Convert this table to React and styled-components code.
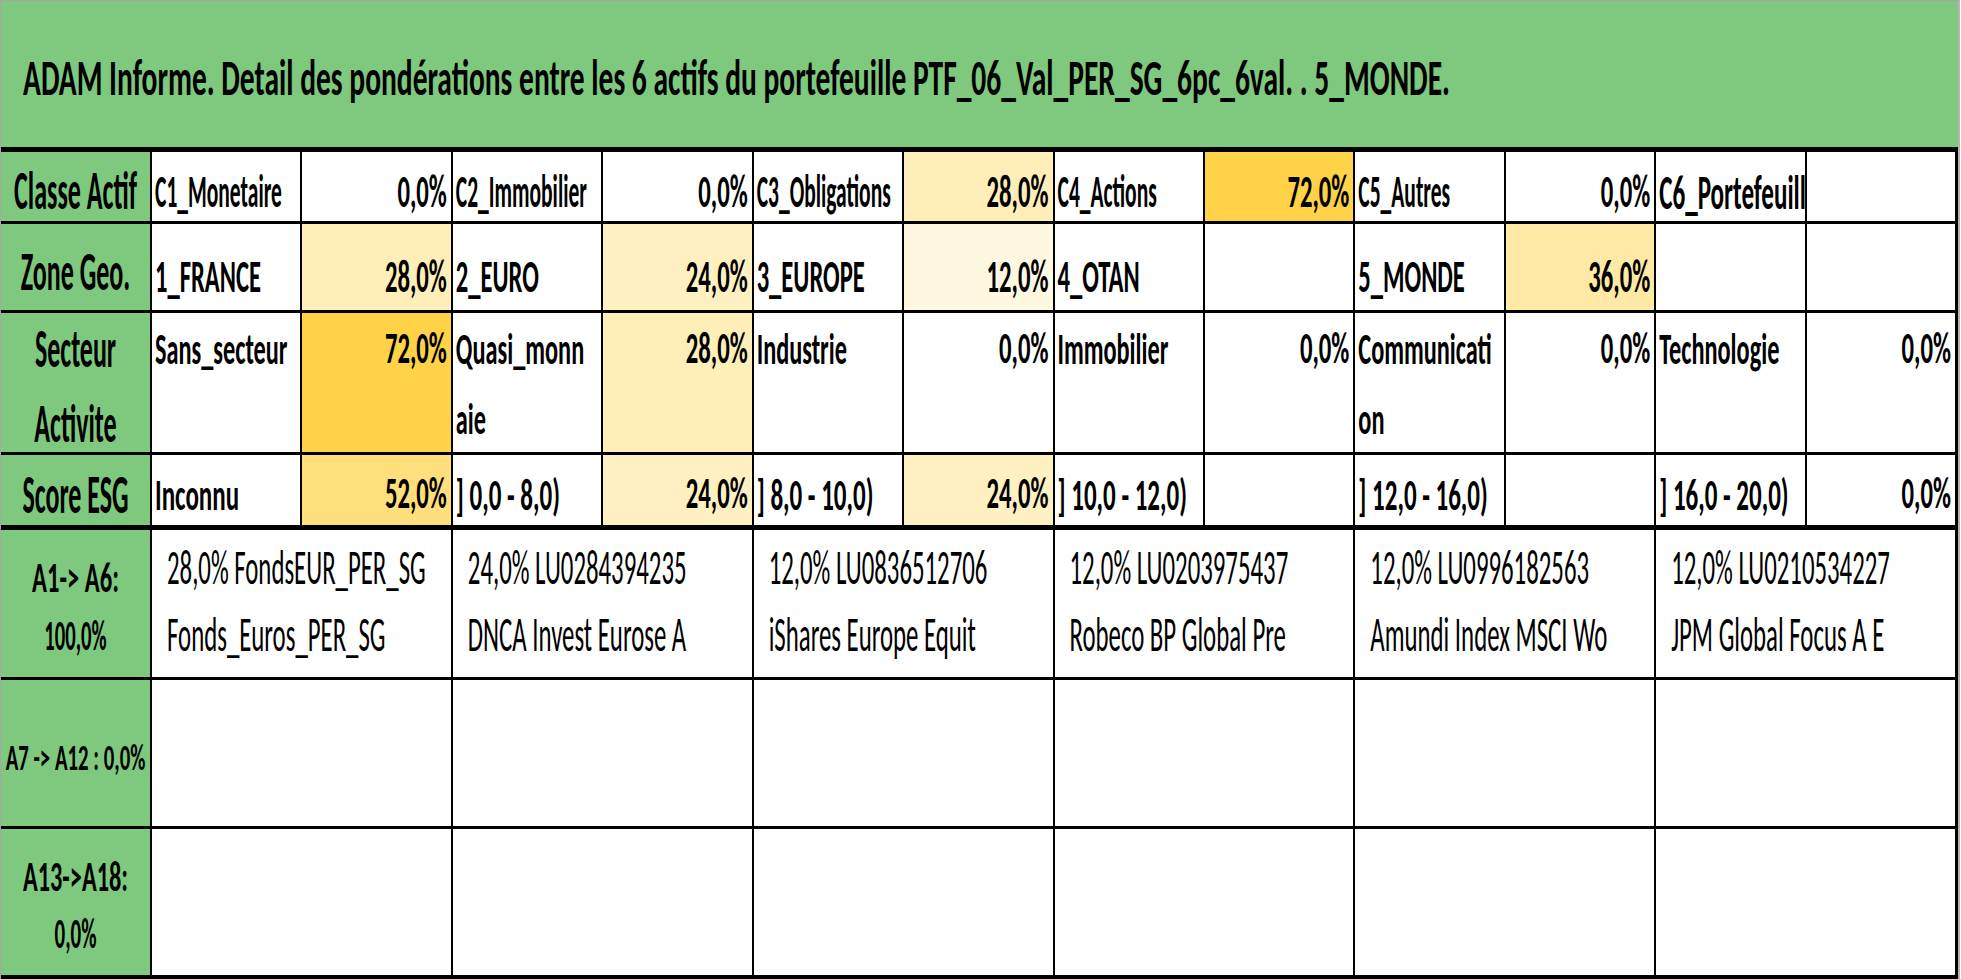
import React from "react";
import styled, { createGlobalStyle } from "styled-components";

const GREEN = "#7fc97e";
const FONT = "Carlito, Calibri, Lato, sans-serif";
// baseline sits at 0.8em inside a line-height:1 box for this font
const ASC = 0.8;

// Excel-like colour scale: white at 0 %, gold at the max (72 %)
function heat(value) {
  if (!value) return "#ffffff";
  const t = Math.min(1, parseFloat(value.replace(",", ".")) / 72);
  const g = Math.round(255 - (255 - 210) * t);
  const b = Math.round(255 - (255 - 72) * t);
  return `rgb(255, ${g}, ${b})`;
}

const topRows = [
  {
    h: 69, bb: 3, valign: "bottom", base: 14, step: 0,
    name: { fs: 21.5, sy: 2.13 }, value: { fs: 24.7, sy: 1.86 },
    label: { lines: ["Classe Actif"], valign: "bottom", base: 14, step: 0 },
    cells: [
      [["C1_Monetaire"], "0,0%"],
      [["C2_Immobilier"], "0,0%"],
      [["C3_Obligations"], "28,0%"],
      [["C4_Actions"], "72,0%"],
      [["C5_Autres"], "0,0%"],
      [["C6_Portefeuill"], "", { fs: 25.1, sy: 1.92 }],
    ],
  },
  {
    h: 86, bb: 3, valign: "bottom", base: 18, step: 0,
    name: { fs: 24.6, sy: 1.87 }, value: { fs: 24.7, sy: 1.86 },
    label: { lines: ["Zone Geo."], valign: "bottom", base: 22, step: 0 },
    cells: [
      [["1_FRANCE"], "28,0%"],
      [["2_EURO"], "24,0%"],
      [["3_EUROPE"], "12,0%"],
      [["4_OTAN"], ""],
      [["5_MONDE"], "36,0%"],
      [[""], ""],
    ],
  },
  {
    h: 139, bb: 3, valign: "top", base: 50, step: 70,
    name: { fs: 24.3, sy: 1.82 }, value: { fs: 24.7, sy: 1.8 },
    label: { lines: ["Secteur", "Activite"], valign: "top", base: 52, step: 75 },
    cells: [
      [["Sans_secteur"], "72,0%"],
      [["Quasi_monn", "aie"], "28,0%"],
      [["Industrie"], "0,0%"],
      [["Immobilier"], "0,0%"],
      [["Communicati", "on"], "0,0%"],
      [["Technologie"], "0,0%"],
    ],
  },
  {
    h: 70, bb: 5, valign: "bottom", base: 17, step: 0,
    name: { fs: 25, sy: 1.77 }, value: { fs: 24.7, sy: 1.83 },
    label: { lines: ["Score ESG"], valign: "bottom", base: 14, step: 0 },
    cells: [
      [["Inconnu"], "52,0%"],
      [["] 0,0 - 8,0)"], "24,0%"],
      [["] 8,0 - 10,0)"], "24,0%"],
      [["] 10,0 - 12,0)"], ""],
      [["] 12,0 - 16,0)"], ""],
      [["] 16,0 - 20,0)"], "0,0%"],
    ],
  },
];

const LABEL = { fs: 26, sy: 2.08 };
const ASSET = { fs: 24.8, sy: 2.0, base: 54, step: 67 };

const assetRows = [
  {
    h: 147, bb: 3,
    label: {
      pt: 42.3, gap: 36.5,
      lines: [
        { text: "A1-> A6:", fs: 24.6, sy: 1.74 },
        { text: "100,0%", fs: 20.7, sy: 2.0 },
      ],
    },
    assets: [
      ["28,0% FondsEUR_PER_SG", "Fonds_Euros_PER_SG"],
      ["24,0% LU0284394235", "DNCA Invest Eurose A"],
      ["12,0% LU0836512706", "iShares Europe Equit"],
      ["12,0% LU0203975437", "Robeco BP Global Pre"],
      ["12,0% LU0996182563", "Amundi Index MSCI Wo"],
      ["12,0% LU0210534227", "JPM Global Focus A E"],
    ],
  },
  {
    h: 146, bb: 3,
    label: {
      pt: 73.4, gap: 0,
      lines: [{ text: "A7 -> A12 : 0,0%", fs: 20.8, sy: 1.75 }],
    },
    assets: [[], [], [], [], [], []],
  },
  {
    h: 146, bb: 0,
    label: {
      pt: 41.6, gap: 36.3,
      lines: [
        { text: "A13->A18:", fs: 24.3, sy: 1.74 },
        { text: "0,0%", fs: 21, sy: 2.0 },
      ],
    },
    assets: [[], [], [], [], [], []],
  },
];

export default function App() {
  return (
    <>
      <GlobalStyle />
      <Frame>
        <Header>
          <Txt $fs={29.5} $sy={1.72} $bold>
            ADAM Informe. Detail des pondérations entre les 6 actifs du portefeuille
            PTF_06_Val_PER_SG_6pc_6val. . 5_MONDE.
          </Txt>
        </Header>
        <Table>
          {topRows.map((row, i) => (
            <TopRow key={i} $h={row.h} $bb={row.bb}>
              <LabelCell
                $valign={row.label.valign}
                $base={row.label.base}
                $step={row.label.step}
                $fs={LABEL.fs}
              >
                {row.label.lines.map((l) => (
                  <Txt key={l} $fs={LABEL.fs} $sy={LABEL.sy} $bold $origin="50%">
                    {l}
                  </Txt>
                ))}
              </LabelCell>
              {row.cells.map(([name, value, own], j) => {
                const ns = own || row.name;
                return (
                  <React.Fragment key={j}>
                    <DataCell
                      $valign={row.valign}
                      $base={row.base}
                      $step={row.step}
                      $fs={ns.fs}
                    >
                      {name.map((l, k) => (
                        <Txt key={k} $fs={ns.fs} $sy={ns.sy} $bold>
                          {l}
                        </Txt>
                      ))}
                    </DataCell>
                    <DataCell
                      $valign={row.valign}
                      $base={row.base}
                      $fs={row.value.fs}
                      $right
                      $bg={heat(value)}
                    >
                      <Txt $fs={row.value.fs} $sy={row.value.sy} $bold $origin="100%">
                        {value}
                      </Txt>
                    </DataCell>
                  </React.Fragment>
                );
              })}
            </TopRow>
          ))}
          {assetRows.map((row, i) => (
            <AssetRow key={i} $h={row.h} $bb={row.bb}>
              <AssetLabel $pt={row.label.pt} $gap={row.label.gap}>
                {row.label.lines.map((l) => (
                  <Txt key={l.text} $fs={l.fs} $sy={l.sy} $bold $origin="50%">
                    {l.text}
                  </Txt>
                ))}
              </AssetLabel>
              {row.assets.map((lines, j) => (
                <AssetCell key={j}>
                  {lines.map((l) => (
                    <Txt key={l} $fs={ASSET.fs} $sy={ASSET.sy}>
                      {l}
                    </Txt>
                  ))}
                </AssetCell>
              ))}
            </AssetRow>
          ))}
        </Table>
      </Frame>
    </>
  );
}

const GlobalStyle = createGlobalStyle`
  html, body {
    margin: 0;
    padding: 0;
    background: #ffffff;
  }
  body {
    font-family: ${FONT};
    color: #000;
    overflow: hidden;
  }
  * {
    box-sizing: border-box;
  }
`;

const Frame = styled.div`
  width: 1960px;
  border-top: 1px solid #a6a6a6;
  border-left: 1px solid #a6a6a6;
  border-right: 2px solid #b4b4b4;
`;

const Header = styled.div`
  height: 146px;
  background: ${GREEN};
  padding: ${94 - ASC * 29.5}px 0 0 22px;
`;

const Table = styled.div`
  border-top: 5px solid #000;
  border-right: 3px solid #000;
  border-bottom: 4px solid #000;
`;

const TopRow = styled.div`
  display: grid;
  grid-template-columns: 149px repeat(12, 1fr);
  height: ${(p) => p.$h + p.$bb}px;
  border-bottom: ${(p) => p.$bb}px solid #000;
`;

const AssetRow = styled.div`
  display: grid;
  grid-template-columns: 149px repeat(6, 1fr);
  height: ${(p) => p.$h + p.$bb}px;
  border-bottom: ${(p) => p.$bb}px solid #000;
`;

// shared vertical placement: put the first baseline $base px from the top
// (top aligned) or the last baseline $base px above the bottom
const Cell = styled.div`
  display: flex;
  flex-direction: column;
  justify-content: ${(p) => (p.$valign === "top" ? "flex-start" : "flex-end")};
  gap: ${(p) => (p.$step ? p.$step - p.$fs : 0)}px;
  padding-top: ${(p) => (p.$valign === "top" ? p.$base - ASC * p.$fs : 0)}px;
  padding-bottom: ${(p) => (p.$valign === "top" ? 0 : p.$base - (1 - ASC) * p.$fs)}px;
  min-width: 0;
`;

const LabelCell = styled(Cell)`
  background: ${GREEN};
  align-items: center;
`;

const DataCell = styled(Cell)`
  background: ${(p) => p.$bg || "#ffffff"};
  border-left: 2px solid #000;
  align-items: ${(p) => (p.$right ? "flex-end" : "flex-start")};
  padding-left: ${(p) => (p.$right ? 0 : 3)}px;
  padding-right: ${(p) => (p.$right ? 4 : 0)}px;
  overflow: hidden;
`;

const AssetLabel = styled.div`
  background: ${GREEN};
  display: flex;
  flex-direction: column;
  align-items: center;
  gap: ${(p) => p.$gap}px;
  padding-top: ${(p) => p.$pt}px;
`;

const AssetCell = styled.div`
  background: #ffffff;
  border-left: 2px solid #000;
  display: flex;
  flex-direction: column;
  align-items: flex-start;
  gap: ${ASSET.step - ASSET.fs}px;
  padding: ${ASSET.base - ASC * ASSET.fs}px 0 0 15px;
  overflow: hidden;
  min-width: 0;
`;

const Txt = styled.span`
  display: inline-block;
  font-family: ${FONT};
  font-size: ${(p) => p.$fs}px;
  font-weight: ${(p) => (p.$bold ? 700 : 400)};
  line-height: 1;
  white-space: nowrap;
  transform: scaleY(${(p) => p.$sy});
  transform-origin: ${(p) => p.$origin || "0"} ${ASC}em;
`;
